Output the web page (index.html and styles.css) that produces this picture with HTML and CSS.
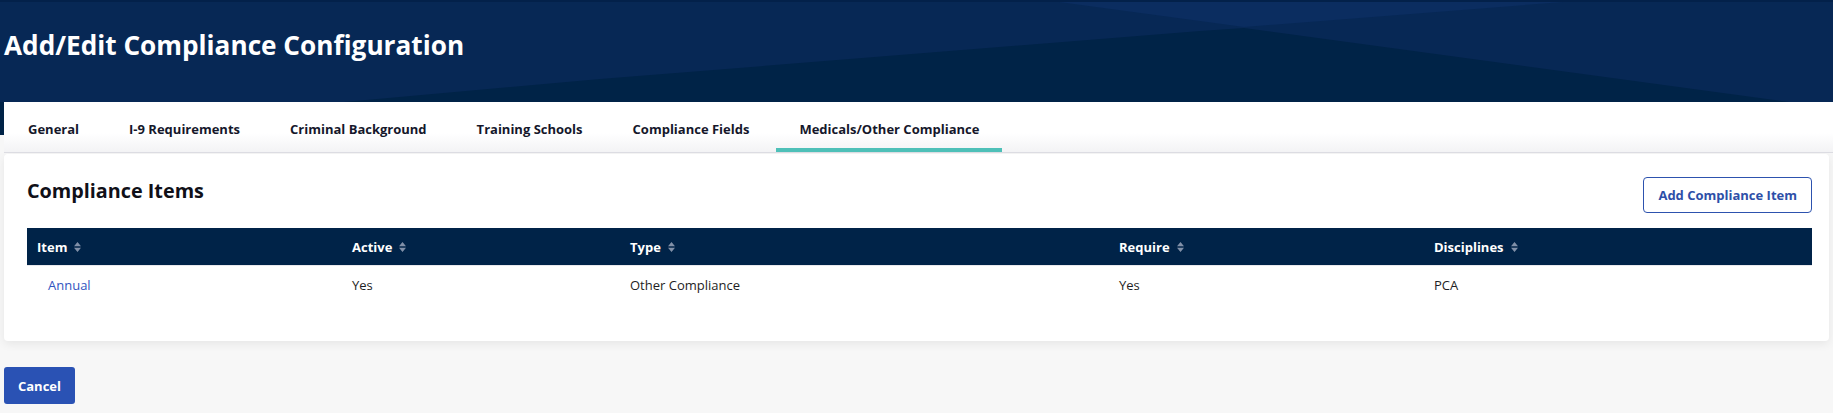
FILE: index.html
```html
<!DOCTYPE html>
<html lang="en">
<head>
<meta charset="utf-8">
<title>Add/Edit Compliance Configuration</title>
<link rel="stylesheet" href="styles.css">
</head>
<body>
<header class="hero">
  <svg class="hero-bg" viewBox="0 0 1833 135" preserveAspectRatio="none" aria-hidden="true">
    <rect x="0" y="0" width="1833" height="135" fill="#072855"/>
    <polygon points="1059,2 1200,21 1244,27 1563,2" fill="#0b2d60"/>
    <polygon points="0,135 0,102 344,102 600,79 1200,31 1244,28 1789,102 1833,110 1833,135" fill="#002347"/>
    <rect x="0" y="0" width="1833" height="2" fill="#03214a"/>
  </svg>
  <h1 class="hero-title">Add/Edit Compliance Configuration</h1>
</header>

<nav class="tabs">
  <a class="tab">General</a>
  <a class="tab">I-9 Requirements</a>
  <a class="tab">Criminal Background</a>
  <a class="tab">Training Schools</a>
  <a class="tab">Compliance Fields</a>
  <a class="tab tab-active">Medicals/Other Compliance</a>
</nav>

<main class="content">
  <section class="card">
    <div class="card-head">
      <h2 class="card-title">Compliance Items</h2>
      <button class="btn-outline">Add Compliance Item</button>
    </div>
    <div class="table">
      <div class="thead">
        <div class="th c1">Item <svg class="sort" viewBox="0 0 7 10"><path d="M0 4.2 L3.5 0 L7 4.2Z M0 5.8 L3.5 10 L7 5.8Z"/></svg></div>
        <div class="th c2">Active <svg class="sort" viewBox="0 0 7 10"><path d="M0 4.2 L3.5 0 L7 4.2Z M0 5.8 L3.5 10 L7 5.8Z"/></svg></div>
        <div class="th c3">Type <svg class="sort" viewBox="0 0 7 10"><path d="M0 4.2 L3.5 0 L7 4.2Z M0 5.8 L3.5 10 L7 5.8Z"/></svg></div>
        <div class="th c4">Require <svg class="sort" viewBox="0 0 7 10"><path d="M0 4.2 L3.5 0 L7 4.2Z M0 5.8 L3.5 10 L7 5.8Z"/></svg></div>
        <div class="th c5">Disciplines <svg class="sort" viewBox="0 0 7 10"><path d="M0 4.2 L3.5 0 L7 4.2Z M0 5.8 L3.5 10 L7 5.8Z"/></svg></div>
      </div>
      <div class="trow">
        <div class="td c1"><a class="link">Annual</a></div>
        <div class="td c2">Yes</div>
        <div class="td c3">Other Compliance</div>
        <div class="td c4">Yes</div>
        <div class="td c5">PCA</div>
      </div>
    </div>
  </section>
  <div class="actions">
    <button class="btn-primary">Cancel</button>
  </div>
</main>
</body>
</html>
```
FILE: styles.css
```css
* { box-sizing: border-box; }
html, body {
  margin: 0;
  padding: 0;
}
body {
  background: #f7f7f7;
  font-family: "Open Sans", "Noto Sans", "Liberation Sans", sans-serif;
  color: #1c1c24;
  width: 1833px;
  height: 413px;
  overflow: hidden;
}

.hero {
  position: relative;
  height: 135px;
  overflow: hidden;
}
.hero-bg {
  position: absolute;
  left: 0;
  top: 0;
  width: 100%;
  height: 100%;
  display: block;
}
.hero-title {
  position: relative;
  margin: 0;
  padding: 27px 0 0 4px;
  color: #ffffff;
  font-size: 26.2px;
  font-weight: 700;
  line-height: 37px;
  letter-spacing: 0;
}

.tabs {
  position: relative;
  display: flex;
  gap: 4px;
  margin: -33px 0 0 4px;
  padding-left: 1px;
  height: 51px;
  background: linear-gradient(to bottom, #ffffff 0%, #ffffff 62%, #f3f3f5 100%);
  border-bottom: 1px solid #dcdce2;
}
.tab {
  position: relative;
  display: block;
  padding: 18px 23px 0;
  font-size: 13px;
  font-weight: 700;
  line-height: 18px;
  color: #15172b;
  white-space: nowrap;
}
.tab-active::after {
  content: "";
  position: absolute;
  left: 0;
  right: 0;
  bottom: 0;
  height: 4px;
  background: #4ec0b8;
}

.content {
  padding: 1px 4px 0 4px;
}
.card {
  background: #ffffff;
  border-radius: 4px;
  box-shadow: 0 3px 10px rgba(0, 0, 0, 0.07);
  padding: 23px 17px 37px 23px;
}
.card-head {
  display: flex;
  justify-content: space-between;
  align-items: flex-start;
}
.card-title {
  margin: 0;
  font-size: 19.8px;
  font-weight: 700;
  line-height: 27px;
  color: #101018;
}
.btn-outline {
  height: 36px;
  padding: 0 14px;
  background: #ffffff;
  border: 1px solid #2d52ae;
  border-radius: 4px;
  color: #2d4fa8;
  font-family: inherit;
  font-size: 13px;
  font-weight: 700;
}

.table {
  margin-top: 15px;
}
.thead, .trow {
  display: grid;
  grid-template-columns: 315px 278px 489px 315px 1fr;
}
.thead {
  background: #002348;
  height: 38px;
  border-bottom: 1px solid #e8e8ec;
}
.th {
  display: flex;
  align-items: center;
  gap: 7px;
  padding-left: 10px;
  color: #ffffff;
  font-size: 13px;
  font-weight: 700;
}
.sort {
  width: 7px;
  height: 10px;
  fill: #8190a8;
}
.trow {
  height: 38px;
}
.td {
  display: flex;
  align-items: center;
  padding-left: 10px;
  font-size: 13px;
  color: #1e1e24;
}
.link {
  padding-left: 11px;
  color: #3255c0;
}

.actions {
  margin-top: 26px;
}
.btn-primary {
  height: 37px;
  width: 71px;
  padding: 0;
  border: none;
  border-radius: 3px;
  background: #2a52b4;
  color: #ffffff;
  font-family: inherit;
  font-size: 13px;
  font-weight: 700;
}
```
